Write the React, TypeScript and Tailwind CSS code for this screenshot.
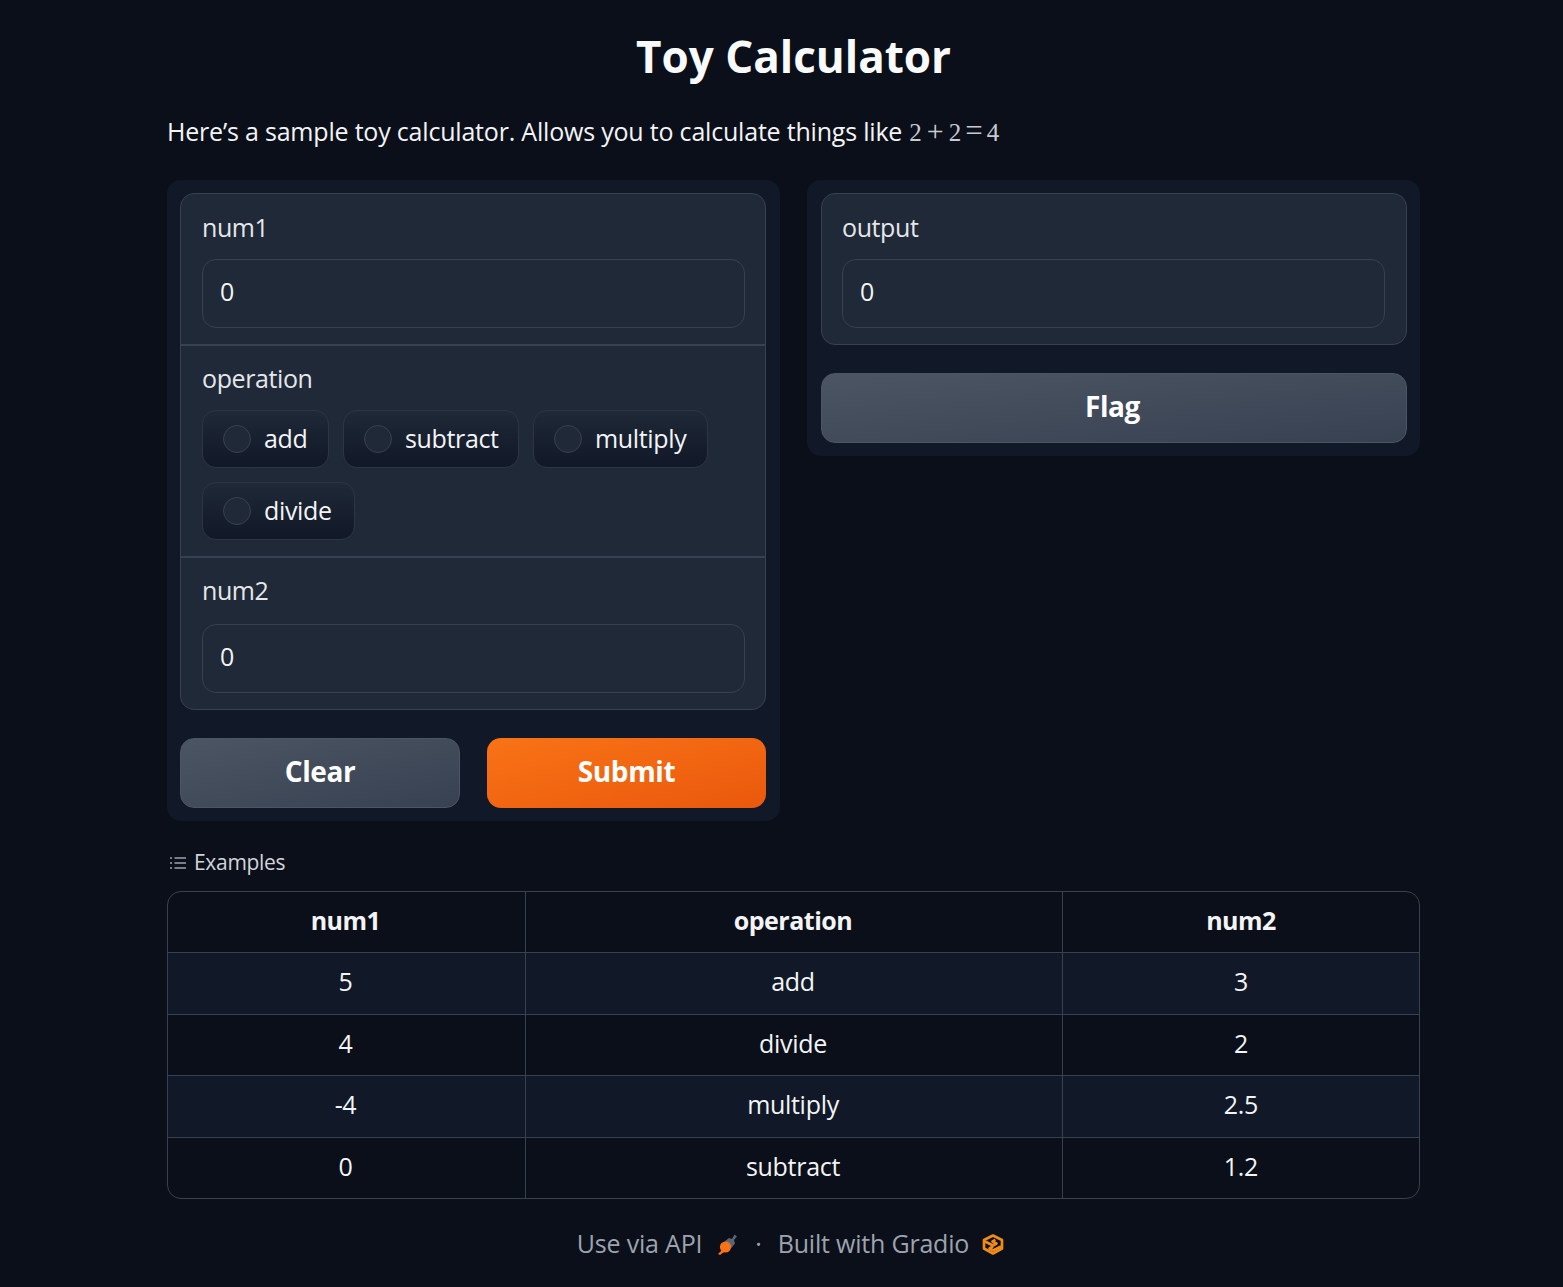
const font = { fontFamily: '"Open Sans", "Noto Sans", sans-serif' };

function NumberBlock({ label, value, className = "" }: { label: string; value: string; className?: string }) {
  return (
    <div className={className}>
      <div className="h-[36px] text-[25px] leading-[36px] text-[#e5e7eb] tracking-[-0.4px]">{label}</div>
      <div className="flex h-[69px] items-center rounded-[14px] border border-[#374151] bg-[#1f2937] px-[17px] pb-[4px] text-[25px] text-[#f3f4f6]">
        {value}
      </div>
    </div>
  );
}

function Radio({ label, className }: { label: string; className: string }) {
  return (
    <div
      className={`flex h-[58px] items-center gap-[13px] rounded-[14px] border border-[#2b3545] bg-gradient-to-b from-[#1f2937] to-[#111827] pl-[20px] text-[25px] tracking-[-0.35px] text-[#f3f4f6] ${className}`}
    >
      <span className="h-[28px] w-[28px] rounded-full border border-[#374151] bg-[#1f2937]" />
      {label}
    </div>
  );
}

function Btn({ label, primary = false, className = "" }: { label: string; primary?: boolean; className?: string }) {
  return (
    <div
      className={`flex h-[70px] items-center justify-center rounded-[14px] pb-[5px] text-[28px] font-bold tracking-[-0.4px] text-white ${
        primary
          ? "bg-gradient-to-br from-[#f97316] to-[#ea580c]"
          : "border border-[#4b5563] bg-gradient-to-br from-[#4b5563] to-[#374151]"
      } ${className}`}
    >
      {label}
    </div>
  );
}

const rows = [
  ["5", "add", "3"],
  ["4", "divide", "2"],
  ["-4", "multiply", "2.5"],
  ["0", "subtract", "1.2"],
];

export default function App() {
  return (
    <div className="min-h-[1287px] bg-[#0b0f19] text-white" style={font}>
      <div className="ml-[167px] w-[1253px] pt-[26px]">
        <h1 className="text-center text-[44px] font-bold leading-[60px] text-[#f9fafb]">Toy Calculator</h1>
        <p className="mt-[27px] flex h-[40px] items-baseline text-[25px] leading-[36px] tracking-[-0.2px] text-[#f3f4f6]">
          Here’s a sample toy calculator. Allows you to calculate things like
          <span className="ml-[7px] tracking-normal text-[#c7cbd1]" style={{ fontFamily: '"Liberation Serif", serif' }}>
            2<span className="mx-[5px] text-[30px] leading-none">+</span>2
            <span className="mx-[4px] text-[31px] leading-none">=</span>4
          </span>
        </p>

        <div className="mt-[27px] flex items-start gap-[27px]">
          <div className="w-[613px] rounded-[14px] bg-[#111827] p-[13px]">
            <div className="w-[586px] overflow-hidden rounded-[14px] border border-[#374151] bg-[#1f2937]">
              <NumberBlock label="num1" value="0" className="h-[152px] border-b-2 border-[#374151] pl-[21px] pr-[20px] pt-[15px] [&>div:last-child]:mt-[14px]" />
              <div className="h-[212px] border-b-2 border-[#374151] px-[21px] pt-[14px]">
                <div className="h-[36px] text-[25px] leading-[36px] tracking-[-0.4px] text-[#e5e7eb]">operation</div>
                <div className="mt-[14px] flex flex-wrap gap-x-[14px] gap-y-[14px]">
                  <Radio label="add" className="w-[127px]" />
                  <Radio label="subtract" className="w-[176px]" />
                  <Radio label="multiply" className="w-[175px]" />
                  <Radio label="divide" className="w-[153px]" />
                </div>
              </div>
              <NumberBlock label="num2" value="0" className="h-[151px] pl-[21px] pr-[20px] pt-[14px] [&>div:last-child]:mt-[16px]" />
            </div>
            <div className="mt-[28px] flex gap-[27px]">
              <Btn label="Clear" className="w-[280px]" />
              <Btn label="Submit" primary className="w-[279px]" />
            </div>
          </div>

          <div className="w-[613px] rounded-[14px] bg-[#111827] py-[13px] pl-[14px] pr-[13px]">
            <div className="w-[586px] overflow-hidden rounded-[14px] border border-[#374151] bg-[#1f2937]">
              <NumberBlock label="output" value="0" className="h-[150px] pl-[20px] pr-[21px] pt-[15px] [&>div:last-child]:mt-[14px]" />
            </div>
            <Btn label="Flag" className="mt-[28px] w-[586px] pr-[3px]" />
          </div>
        </div>

        <div className="mt-[28px] flex h-[28px] items-center gap-[8px] pl-[3px] text-[21px] tracking-[-0.3px] text-[#d1d5db]">
          <svg width="16" height="14" viewBox="0 0 16 14" fill="none" stroke="#9ca3af" strokeWidth="1.6">
            <path d="M4.5 2H16M4.5 7H16M4.5 12H16" />
            <path d="M0 2h2M0 7h2M0 12h2" />
          </svg>
          Examples
        </div>

        <div className="mt-[14px] overflow-hidden rounded-[14px] border border-[#374151]">
          <div className="grid h-[60px] grid-cols-[357px_537px_1fr] items-stretch text-center text-[25px] font-bold tracking-[-0.5px] text-[#f3f4f6]">
            <div className="flex items-center justify-center pb-[2px] pr-[2px]">num1</div>
            <div className="flex items-center justify-center border-l border-[#374151] pb-[2px] pr-[2px]">operation</div>
            <div className="flex items-center justify-center border-l border-[#374151] pb-[2px]">num2</div>
          </div>
          {rows.map((row, i) => (
            <div
              key={row[0]}
              className={`grid h-[61.5px] grid-cols-[357px_537px_1fr] border-t border-[#374151] text-center text-[25px] tracking-[-0.3px] text-[#f3f4f6] ${
                i % 2 === 0 ? "bg-[#111827]" : ""
              }`}
            >
              {row.map((cell, j) => (
                <div key={j} className={`flex items-center justify-center pb-[3px] ${j < 2 ? "pr-[2px]" : ""} ${j > 0 ? "border-l border-[#374151]" : ""}`}>
                  {cell}
                </div>
              ))}
            </div>
          ))}
        </div>

        <div className="mt-[27px] flex h-[36px] items-center justify-center gap-[14px] pr-[6px] text-[25px] tracking-[-0.2px] text-[#9ca3af]">
          <span>Use via API</span>
          <svg width="22" height="22" viewBox="0 0 22 22" className="ml-[1px]">
            <path d="M17.5 1.5l2.5 2-3 3.5 1 3.5-3.5 4.5-7-6.5 4.5-3.5 3 1z" fill="#5b6472" />
            <circle cx="8.5" cy="14" r="5.6" fill="#f97316" />
            <path d="M5 17l2 2-4 3-2-1z" fill="#f97316" />
          </svg>
          <span className="mx-[2px] text-[#9ca3af]">·</span>
          <span>Built with Gradio</span>
          <svg width="22" height="21" viewBox="0 0 22 21" fill="none" stroke="#ee8a1b" strokeWidth="2.7" strokeLinejoin="round" className="-ml-[1px]">
            <path d="M11 1.5l9 4.5v8.5l-9 5-9-5V6z" />
            <path d="M3 7.5l8 4 3.5-2-4-2 3-1.5M19 12.5l-8 4-3.5-2 3.5-2" />
          </svg>
        </div>
      </div>
    </div>
  );
}
